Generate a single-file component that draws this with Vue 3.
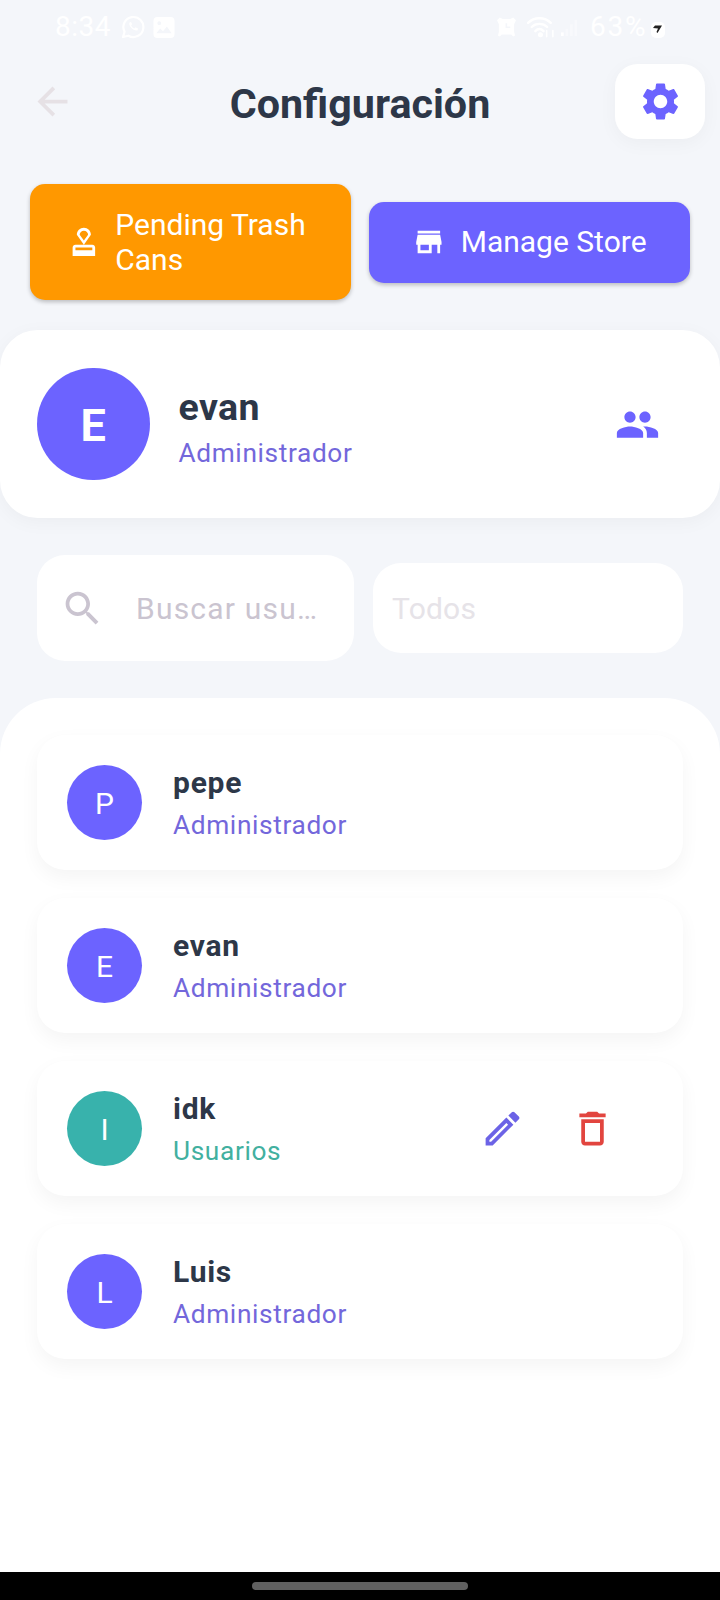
<script setup>
const users = [
  { name: 'pepe', role: 'Administrador', kind: 'admin', editable: false },
  { name: 'evan', role: 'Administrador', kind: 'admin', editable: false },
  { name: 'idk', role: 'Usuarios', kind: 'user', editable: true },
  { name: 'Luis', role: 'Administrador', kind: 'admin', editable: false },
]
</script>

<template>
  <div class="screen">
    <div class="status">
      <div class="status-left">
        <span class="clock">8:34</span>
        <svg class="s-wa" viewBox="0 0 24 24" fill="none" stroke="#fff" stroke-width="2.2">
          <path d="M2 22l1.6-5.2A10 10 0 1 1 7.4 20.700z" stroke-linejoin="round" />
          <path d="M8.500 7.500c-1.500 3 4 9 8 8l.5-2-2.500-1.200-1.200 1.200c-1.500-.6-2.600-1.800-3.200-3.200l1.100-1.100L10 7z" fill="#fff" stroke="none" />
        </svg>
        <svg class="s-img" viewBox="0 0 22 22">
          <path fill="#fff" fill-rule="evenodd" d="M4 0h14a4 4 0 0 1 4 4v14a4 4 0 0 1-4 4H4a4 4 0 0 1-4-4V4a4 4 0 0 1 4-4zM3 17h16l-5-7-4 5-3-3zM6 4.500a2 2 0 1 0 .1 0z" />
        </svg>
      </div>
      <div class="status-right">
        <svg class="s-alarm" viewBox="0 0 20 20">
          <path fill="#fff" fill-rule="evenodd" d="M0 3l3-3 3 1.500h8L17 0l3 3-2 4v8l1 4-2 1-2-2H5l-2 2-2-1 1-4V7zM9 6v5h5V9.500h-3.300V6z" />
        </svg>
        <svg class="s-wifi" viewBox="0 0 30 22" fill="none" stroke="#fff" stroke-width="2.300" stroke-linecap="round">
          <path d="M2 6.500C8 .5 18 .5 24 6.500M5.500 10.500c4-4 11-4 15 0M9 14.500c2.500-2.500 5.500-2.500 8 0" />
          <circle cx="14" cy="18" r="1.300" fill="#fff" />
          <path d="M20 14v6M26 20v-6" stroke-width="1.500" />
        </svg>
        <svg class="s-signal" viewBox="0 0 20 20" fill="#fff">
          <path d="M0 16h3v4H0z" />
          <path opacity=".4" d="M5 12h3v8H5zM10 7h3v13h-3zM15 2h3v18h-3z" />
        </svg>
        <span class="battery-text">63%</span>
        <svg class="s-bat" viewBox="0 0 18 22">
          <rect x="2" y="4" width="14" height="16" rx="5" fill="#fff" />
          <path d="M4 10l2-2.500h7l-4.500 7.500-1-1 1.500-3.500z" fill="#222" />
        </svg>
      </div>
    </div>

    <header class="header">
      <svg class="back" viewBox="0 0 24 24"><path fill="#e6e1e5" d="M20 11H7.830l5.590-5.590L12 4l-8 8 8 8 1.410-1.410L7.830 13H20v-2z" /></svg>
      <h1 class="title">Configuración</h1>
      <button class="gear">
        <svg class="icon" viewBox="0 0 24 24"><path fill="#6c63ff" d="M19.140 12.940c.04-.3.060-.61.060-.94 0-.32-.02-.64-.07-.94l2.030-1.580c.18-.14.230-.41.120-.61l-1.920-3.320c-.12-.22-.37-.29-.59-.22l-2.390.96c-.5-.38-1.030-.7-1.620-.94l-.36-2.540c-.04-.24-.24-.41-.48-.41h-3.840c-.24 0-.43.17-.47.41l-.36 2.540c-.59.24-1.130.57-1.620.94l-2.390-.96c-.22-.08-.47 0-.59.22L2.740 8.870c-.12.21-.08.47.12.61l2.030 1.580c-.05.3-.09.63-.09.94s.02.64.07.94l-2.030 1.580c-.18.14-.23.41-.12.61l1.920 3.320c.12.22.37.29.59.22l2.390-.96c.5.38 1.030.7 1.620.94l.36 2.540c.05.24.24.41.48.41h3.840c.24 0 .44-.17.47-.41l.36-2.540c.59-.24 1.130-.56 1.620-.94l2.390.96c.22.08.47 0 .59-.22l1.920-3.320c.12-.22.07-.47-.12-.61l-2.010-1.580zM12 15.600c-1.980 0-3.600-1.620-3.600-3.600s1.620-3.600 3.600-3.600 3.600 1.620 3.600 3.600-1.620 3.600-3.600 3.600z" /></svg>
      </button>
    </header>

    <div class="actions">
      <button class="action pending">
        <svg viewBox="0 0 24 24"><path fill="#fff" d="M4 16v6h16v-6c0-1.100-.9-2-2-2H6c-1.100 0-2 .9-2 2zm14 2H6v-2h12v2zM12 2C9.240 2 7 4.240 7 7l5 7 5-7c0-2.760-2.240-5-5-5zm0 9L9 7c0-1.660 1.340-3 3-3s3 1.340 3 3l-3 4z" /></svg>
        <span>Pending Trash Cans</span>
      </button>
      <button class="action store">
        <svg viewBox="0 0 24 24"><path fill="#fff" d="M20 4H4v2h16V4zm1 10v-2l-1-5H4l-1 5v2h1v6h10v-6h4v6h2v-6h1zm-9 4H6v-4h6v4z" /></svg>
        <span>Manage Store</span>
      </button>
    </div>

    <section class="profile">
      <div class="avatar big"><span>E</span></div>
      <div class="profile-text">
        <div class="profile-name">evan</div>
        <div class="role admin">Administrador</div>
      </div>
      <svg class="icon" viewBox="0 0 24 24"><path fill="#6c63ff" d="M16 11c1.660 0 2.990-1.340 2.990-3S17.660 5 16 5s-3 1.340-3 3 1.340 3 3 3zm-8 0c1.660 0 2.990-1.340 2.990-3S9.660 5 8 5 5 6.340 5 8s1.340 3 3 3zm0 2c-2.330 0-7 1.170-7 3.500V19h14v-2.500c0-2.330-4.670-3.500-7-3.500zm8 0c-.29 0-.62.020-.97.050 1.160.84 1.970 1.970 1.970 3.450V19h6v-2.500c0-2.330-4.670-3.500-7-3.500z" /></svg>
    </section>

    <div class="filters">
      <div class="search">
        <svg class="icon" viewBox="0 0 24 24"><path fill="#cac4d0" d="M15.500 14h-.79l-.28-.27C15.410 12.590 16 11.110 16 9.500 16 5.910 13.090 3 9.500 3S3 5.910 3 9.500 5.910 16 9.500 16c1.610 0 3.090-.59 4.230-1.570l.27.28v.79l5 4.990L20.490 19l-4.990-5zm-6 0C7.010 14 5 11.990 5 9.500S7.010 5 9.500 5 14 7.010 14 9.500 11.990 14 9.500 14z" /></svg>
        <span>Buscar usu…</span>
      </div>
      <div class="select"><span>Todos</span></div>
    </div>

    <main class="panel">
      <article v-for="u in users" :key="u.name" class="card">
        <div class="avatar" :class="u.kind"><span>{{ u.name[0].toUpperCase() }}</span></div>
        <div class="card-text">
          <div class="name">{{ u.name }}</div>
          <div class="role" :class="u.kind">{{ u.role }}</div>
        </div>
        <div v-if="u.editable" class="tools">
          <svg class="icon" viewBox="0 0 24 24"><path fill="#6c63e6" d="M3 17.250V21h3.750L17.810 9.940l-3.750-3.750L3 17.250zM5.920 19H5v-.92l9.060-9.060.92.92L5.920 19zM20.710 5.630l-2.340-2.340c-.2-.2-.45-.29-.71-.29s-.51.1-.7.290l-1.830 1.830 3.750 3.750 1.830-1.830c.39-.39.39-1.020 0-1.410z" /></svg>
          <svg class="icon" viewBox="0 0 24 24"><path fill="#e2453f" d="M6 19c0 1.100.9 2 2 2h8c1.100 0 2-.9 2-2V7H6v12zM8 9h8v10H8V9zm7.500-5l-1-1h-5l-1 1H5v2h14V4h-3.500z" /></svg>
        </div>
      </article>
    </main>

    <footer class="navbar"><div class="pill"></div></footer>
  </div>
</template>

<style>
body { margin: 0; }
</style>

<style scoped>
.screen {
  width: 720px;
  height: 1600px;
  display: flex;
  flex-direction: column;
  overflow: hidden;
  background: #f4f6fa;
  font-family: Roboto, "Noto Sans", sans-serif;
  color: #2d3748;
}
.screen * { box-sizing: border-box; }
svg { display: block; flex: none; }
.icon { width: 45px; height: 45px; }
button { border: 0; margin: 0; font: inherit; }

.status {
  height: 64px;
  padding: 13px 54px 23px 55px;
  display: flex;
  justify-content: space-between;
  align-items: center;
  color: #fff;
  font-size: 28px;
  line-height: 28px;
}
.status-left, .status-right { display: flex; align-items: center; }
.clock { width: 66px; letter-spacing: .5px; }
.s-wa { width: 24px; height: 24px; margin-right: 8px; }
.s-img { width: 22px; height: 21px; }
.s-alarm { width: 19px; height: 20px; margin-right: 10px; }
.s-wifi { width: 31px; height: 23px; margin-right: 3px; }
.s-signal { width: 20px; height: 18px; margin-right: 10px; }
.battery-text { width: 58px; letter-spacing: 1.8px; }
.s-bat { width: 18px; height: 22px; margin: 3px -1px 0 1px; }

.header {
  height: 75px;
  padding: 0 15px 0 30px;
  display: grid;
  grid-template-columns: 75px 1fr 90px;
  align-items: center;
}
.back { width: 45px; height: 45px; }
.title {
  margin: 0;
  padding-top: 4px;
  text-align: center;
  font-size: 41.250px;
  line-height: 48px;
  font-weight: 700;
}
.gear {
  height: 75px;
  display: flex;
  align-items: center;
  justify-content: center;
  padding: 0;
  background: #fff;
  border-radius: 22.500px;
  box-shadow: 0 4px 19px rgba(0, 0, 0, .04);
}

.actions {
  height: 191px;
  padding: 15px 30px 0;
  display: flex;
  align-items: center;
  gap: 18px;
}
.action {
  width: 321px;
  flex: none;
  display: flex;
  align-items: center;
  justify-content: center;
  gap: 14.500px;
  border-radius: 15px;
  color: #fff;
  text-align: left;
  font-size: 30px;
  line-height: 35px;
  box-shadow: 0 2px 4px rgba(0, 0, 0, .24);
}
.action svg { width: 33.750px; height: 33.750px; }
.pending { height: 116px; padding: 0 38px 0 37px; background: #ff9800; }
.store { height: 81px; padding: 0 0 1px; background: #6c63ff; }

.profile {
  height: 188px;
  padding: 0 60px 0 37px;
  display: flex;
  align-items: center;
  background: #fff;
  border-radius: 37.500px;
  box-shadow: 0 4px 19px rgba(0, 0, 0, .04);
}
.avatar {
  width: 75px;
  height: 75px;
  flex: none;
  display: flex;
  align-items: center;
  justify-content: center;
  padding-top: 1px;
  border-radius: 50%;
  background: #6c63ff;
  color: #fff;
  font-size: 30px;
}
.avatar.user { background: #38b2ac; }
.avatar.big { width: 112.500px; height: 112.500px; padding-top: 2px; font-size: 45px; font-weight: 700; }
.profile-text { flex: 1; padding: 4px 0 0 29px; }
.profile-name { font-size: 37.500px; line-height: 44px; font-weight: 700; letter-spacing: .4px; margin-bottom: 9px; }
.role { font-size: 26.250px; line-height: 30px; letter-spacing: .64px; }
.role.admin { color: #7367db; }
.role.user { color: #42b09f; }

.filters {
  height: 180px;
  padding: 0 37px;
  display: flex;
  align-items: center;
  gap: 19px;
  font-size: 30px;
  line-height: 36px;
}
.search {
  width: 316.500px;
  height: 106px;
  display: flex;
  align-items: center;
  padding-left: 23px;
  gap: 31px;
  background: #fff;
  border-radius: 28px;
  color: #cac4d0;
  letter-spacing: 1.200px;
}
.search span, .select span { padding-top: 2px; }
.select {
  flex: 1;
  height: 90px;
  display: flex;
  align-items: center;
  padding-left: 19.500px;
  background: #fff;
  border-radius: 28px;
  color: #e6e3e8;
  letter-spacing: .200px;
}

.panel {
  flex: 1;
  padding: 37px 37px 0;
  display: flex;
  flex-direction: column;
  gap: 28px;
  background: #fff;
  border-radius: 56px 56px 0 0;
}
.card {
  height: 135px;
  padding: 0 67px 0 30px;
  display: flex;
  align-items: center;
  background: #fff;
  border-radius: 28px;
  box-shadow: 0 7.500px 19px rgba(0, 0, 0, .045);
}
.card-text { flex: 1; padding-left: 31px; }
.name { font-size: 30px; line-height: 36px; font-weight: 700; letter-spacing: .75px; margin-bottom: 9.500px; }
.tools { display: flex; gap: 45px; margin-right: 1px; }

.navbar {
  height: 28px;
  display: flex;
  justify-content: center;
  padding-top: 10px;
  background: #000;
}
.pill { width: 216px; height: 8px; border-radius: 4px; background: #606060; }
</style>
